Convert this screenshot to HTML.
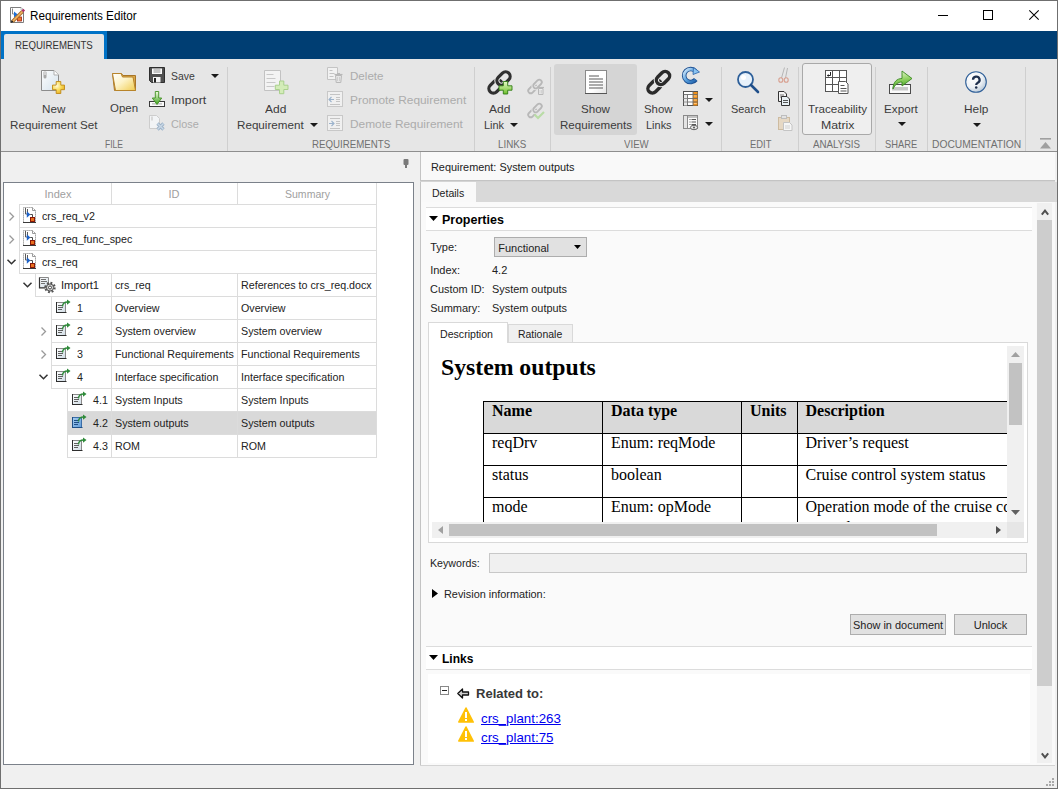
<!DOCTYPE html>
<html><head><meta charset="utf-8">
<style>
*{margin:0;padding:0;box-sizing:border-box}
html,body{width:1058px;height:789px;overflow:hidden;background:#f0f0f0;font-family:"Liberation Sans",sans-serif;color:#222}
.a{position:absolute}
.t{position:absolute;white-space:nowrap;line-height:1}
svg{position:absolute;overflow:visible}
</style></head><body>
<div class="a" style="left:0px;top:0px;width:1058px;height:789px;background:#6f6f6f;"></div>
<div class="a" style="left:1px;top:1px;width:1056px;height:787px;background:#f0f0f0;"></div>
<div class="a" style="left:1px;top:1px;width:1056px;height:30px;background:#ffffff;"></div>
<svg style="left:10px;top:7px" width="16" height="16" viewBox="0 0 16 16"><path d="M0.5 0.5h10.5l2.5 2.5v12.5h-13z" fill="#fff" stroke="#7d7d7d"/><path d="M11 0.5v2.5h2.5" fill="#f0f0f0" stroke="#aaa" stroke-width="0.6"/><path d="M2.5 1.5v5.5h1.5" fill="none" stroke="#6a6a6a" stroke-width="0.8"/><path d="M4 4.5l3.8 3-3.8 3z" fill="#1d6fd6"/><rect x="7.5" y="10" width="4" height="4" fill="#f07a28" stroke="#a02010" stroke-width="0.8"/><path d="M2.5 14.5L12.5 4.5" stroke="#a86a2a" stroke-width="3.4"/><path d="M2.5 14.5L12.5 4.5" stroke="#f2b664" stroke-width="1.6"/><path d="M11.5 3.5l1.8-1.8 1.8 1.8-1.8 1.8z" fill="#b0306a"/><path d="M0.8 15.7l0.8-2.6 1.8 1.8z" fill="#111"/></svg>
<div class="t" style="left:30.20px;top:8.70px;font:normal 12px 'Liberation Sans',sans-serif;color:#000;transform:scaleX(0.9754);transform-origin:0 0;">Requirements Editor</div>
<div class="a" style="left:938px;top:15px;width:10px;height:1px;background:#000;"></div>
<div class="a" style="left:983px;top:10px;width:10px;height:10px;border:1px solid #000;"></div>
<svg style="left:1029px;top:10px" width="10" height="10" viewBox="0 0 10 10"><path d="M0.3 0.3L9.7 9.7M9.7 0.3L0.3 9.7" stroke="#000" stroke-width="1.05"/></svg>
<div class="a" style="left:1px;top:31px;width:1056px;height:28px;background:#003e73;"></div>
<div class="a" style="left:1px;top:31px;width:106px;height:28px;background:#0072c6;"></div>
<div class="a" style="left:4px;top:34px;width:100px;height:25px;background:#e6e6e6;border-radius:2px 2px 0 0;"></div>
<div class="t" style="left:15.30px;top:39.80px;font:normal 10px 'Liberation Sans',sans-serif;color:#333;transform:scaleX(0.9645);transform-origin:0 0;">REQUIREMENTS</div>
<div class="a" style="left:1px;top:59px;width:1056px;height:92px;background:#e6e6e6;"></div>
<div class="a" style="left:1px;top:151px;width:1056px;height:1px;background:#8e8e8e;"></div>
<div class="a" style="left:227px;top:67px;width:1px;height:84px;background:#cfcfcf;"></div>
<div class="a" style="left:474px;top:67px;width:1px;height:84px;background:#cfcfcf;"></div>
<div class="a" style="left:550px;top:67px;width:1px;height:84px;background:#cfcfcf;"></div>
<div class="a" style="left:721px;top:67px;width:1px;height:84px;background:#cfcfcf;"></div>
<div class="a" style="left:798px;top:67px;width:1px;height:84px;background:#cfcfcf;"></div>
<div class="a" style="left:875px;top:67px;width:1px;height:84px;background:#cfcfcf;"></div>
<div class="a" style="left:927px;top:67px;width:1px;height:84px;background:#cfcfcf;"></div>
<div class="a" style="left:1025px;top:67px;width:1px;height:84px;background:#cfcfcf;"></div>
<svg style="left:41px;top:70px" width="24" height="24" viewBox="0 0 24 24"><defs><linearGradient id="dg" x1="0" y1="0" x2="1" y2="1"><stop offset="0" stop-color="#fdfdfd"/><stop offset="1" stop-color="#d5e3ee"/></linearGradient><radialGradient id="pg" cx="35%" cy="35%" r="75%"><stop offset="0" stop-color="#fffbe0"/><stop offset="0.5" stop-color="#f8dc5a"/><stop offset="1" stop-color="#e8a818"/></radialGradient></defs>
<path d="M0.5 0.5h12.5l4.5 4.5v15.5h-17z" fill="url(#dg)" stroke="#8c8c8c"/><path d="M13 0.5v4.5h4.5" fill="#fff" stroke="#b0b0b0"/>
<rect x="2.5" y="1" width="3" height="7.5" rx="1.5" fill="#a8a8a8"/><rect x="3.4" y="1" width="1.2" height="4" fill="#eee"/>
<path d="M15.2 11.5h4.6v3.6h3.7v4.6h-3.7v3.8h-4.6v-3.8h-3.7v-4.6h3.7z" fill="url(#pg)" stroke="#c08a18" stroke-width="0.9"/></svg>
<div class="t" style="left:41.60px;top:102.60px;font:normal 11.5px 'Liberation Sans',sans-serif;color:#3c3c3c;transform:scaleX(1.0124);transform-origin:0 0;">New</div>
<div class="t" style="left:9.50px;top:118.60px;font:normal 11.5px 'Liberation Sans',sans-serif;color:#3c3c3c;transform:scaleX(1.0139);transform-origin:0 0;">Requirement Set</div>
<svg style="left:112px;top:73px" width="24" height="18" viewBox="0 0 24 18"><defs><linearGradient id="fg" x1="0" y1="0" x2="1" y2="1"><stop offset="0" stop-color="#ffffff"/><stop offset="0.45" stop-color="#fdf3c8"/><stop offset="1" stop-color="#f0cc50"/></linearGradient></defs>
<path d="M0.5 0.5h9l1.5 2h12.5v15h-21z" fill="#d9a84a" stroke="#a87628"/>
<path d="M0.5 0.5h8.5l1.5 3.5h10.5l2.5 13.5h-20z" fill="url(#fg)" stroke="#b8842a"/></svg>
<div class="t" style="left:110.00px;top:102.40px;font:normal 11.5px 'Liberation Sans',sans-serif;color:#3c3c3c;transform:scaleX(0.9950);transform-origin:0 0;">Open</div>
<svg style="left:149px;top:67px" width="16" height="16" viewBox="0 0 16 16"><path d="M0.5 0.5h15v15h-13l-2-2z" fill="#505050" stroke="#2e2e2e"/><rect x="3" y="1.5" width="10" height="5.5" fill="#fafafa"/><path d="M4.5 3h7M4.5 5h7" stroke="#777" stroke-width="0.8"/><rect x="4" y="10" width="7.5" height="5.5" fill="#f4f4f4"/><rect x="5" y="11" width="2" height="4.5" fill="#222"/></svg>
<div class="t" style="left:171.30px;top:70.00px;font:normal 11.5px 'Liberation Sans',sans-serif;color:#3c3c3c;transform:scaleX(0.9077);transform-origin:0 0;">Save</div>
<svg style="left:211px;top:74px" width="8" height="4" viewBox="0 0 8 4"><path d="M0 0h8l-4 4z" fill="#1a1a1a"/></svg>
<svg style="left:149px;top:91px" width="16" height="16" viewBox="0 0 16 16"><defs><linearGradient id="ag" x1="0" y1="0" x2="0" y2="1"><stop offset="0" stop-color="#f4ffe0"/><stop offset="1" stop-color="#3aa01a"/></linearGradient></defs><rect x="0.5" y="10.5" width="15" height="5" fill="#fafafa" stroke="#3a3a3a"/><rect x="3" y="12" width="10" height="1.6" fill="#c8c8c8"/><path d="M6.3 0.5h3.4v6.5h3l-4.7 6.5-4.7-6.5h3z" fill="url(#ag)" stroke="#3f8f20" stroke-width="0.9"/></svg>
<div class="t" style="left:171.30px;top:93.80px;font:normal 11.5px 'Liberation Sans',sans-serif;color:#3c3c3c;transform:scaleX(1.0830);transform-origin:0 0;">Import</div>
<svg style="left:149px;top:115px" width="16" height="16" viewBox="0 0 16 16"><path d="M0.5 0.5h7l3 3v10h-10z" fill="#f2f4f6" stroke="#cdcdcd"/><rect x="2" y="1.5" width="2" height="4" fill="#d8d8d8"/><path d="M8.5 8.5l6 6M14.5 8.5l-6 6" stroke="#9db3c8" stroke-width="3.2"/><path d="M8.5 8.5l6 6M14.5 8.5l-6 6" stroke="#c9d8e6" stroke-width="1.4"/></svg>
<div class="t" style="left:171.30px;top:117.70px;font:normal 11.5px 'Liberation Sans',sans-serif;color:#acacac;transform:scaleX(0.9454);transform-origin:0 0;">Close</div>
<div class="t" style="left:105.00px;top:137.80px;font:normal 10.5px 'Liberation Sans',sans-serif;color:#707070;transform:scaleX(0.8113);transform-origin:0 0;">FILE</div>
<svg style="left:264px;top:70px" width="25" height="25" viewBox="0 0 25 25"><path d="M0.5 0.5h16v20h-16z" fill="#f3f3f3" stroke="#c2c2c2"/><path d="M2.5 4.5h7M2.5 8.5h9M2.5 12.5h9M2.5 16.5h8" stroke="#c8c8c8"/>
<path d="M15.5 11h4.3v4.2h4.2v4.3h-4.2v4.2h-4.3v-4.2h-4.2v-4.3h4.2z" fill="#d3ecb8" stroke="#a9d08c" stroke-width="1"/></svg>
<div class="t" style="left:265.20px;top:102.60px;font:normal 11.5px 'Liberation Sans',sans-serif;color:#3c3c3c;transform:scaleX(1.0406);transform-origin:0 0;">Add</div>
<div class="t" style="left:236.80px;top:118.60px;font:normal 11.5px 'Liberation Sans',sans-serif;color:#3c3c3c;transform:scaleX(1.0130);transform-origin:0 0;">Requirement</div>
<svg style="left:310px;top:123px" width="8" height="4" viewBox="0 0 8 4"><path d="M0 0h8l-4 4z" fill="#1a1a1a"/></svg>
<svg style="left:327px;top:67px" width="16" height="16" viewBox="0 0 16 16"><path d="M0.5 0.5h10v12h-10z" fill="#f2f2f2" stroke="#c4c4c4"/><path d="M2.5 3.5h3M2.5 6.5h5M2.5 9.5h4" stroke="#c4c4c4"/><path d="M7.5 7.5h8" stroke="#b8b8b8" stroke-width="1.2"/><path d="M10 6.5h3" stroke="#b8b8b8"/><path d="M8.5 8.5h6l-0.7 7h-4.6z" fill="#e6e6e6" stroke="#b8b8b8"/><path d="M10.5 10v4M12.5 10v4" stroke="#cfcfcf"/></svg>
<svg style="left:327px;top:91px" width="16" height="16" viewBox="0 0 16 16"><rect x="0.5" y="0.5" width="15" height="15" fill="#f0f0f0" stroke="#c8c8c8"/><path d="M3 3.5h10M9 6.5h4M9 8.5h4M9 10.5h4M3 13.5h10" stroke="#c4c4c4"/><path d="M2 8.5h5M4.5 6l-2.5 2.5 2.5 2.5" stroke="#9cb3cc" fill="none" stroke-width="1.1"/></svg>
<svg style="left:327px;top:115px" width="16" height="16" viewBox="0 0 16 16"><rect x="0.5" y="0.5" width="15" height="15" fill="#f0f0f0" stroke="#c8c8c8"/><path d="M3 3.5h10M9 6.5h4M9 8.5h4M9 10.5h4M3 13.5h10" stroke="#c4c4c4"/><path d="M2 8.5h5M4.5 6l2.5 2.5-2.5 2.5" stroke="#9cb3cc" fill="none" stroke-width="1.1"/></svg>
<div class="t" style="left:349.50px;top:70.00px;font:normal 11.5px 'Liberation Sans',sans-serif;color:#acacac;transform:scaleX(1.0075);transform-origin:0 0;">Delete</div>
<div class="t" style="left:349.50px;top:93.80px;font:normal 11.5px 'Liberation Sans',sans-serif;color:#acacac;transform:scaleX(1.0329);transform-origin:0 0;">Promote Requirement</div>
<div class="t" style="left:349.50px;top:117.70px;font:normal 11.5px 'Liberation Sans',sans-serif;color:#acacac;transform:scaleX(1.0328);transform-origin:0 0;">Demote Requirement</div>
<div class="t" style="left:312.10px;top:137.80px;font:normal 10.5px 'Liberation Sans',sans-serif;color:#707070;transform:scaleX(0.9244);transform-origin:0 0;">REQUIREMENTS</div>
<svg style="left:488px;top:70px" width="24" height="24" viewBox="0 0 24 24"><rect x="0.0" y="12.0" width="15" height="9" rx="4.5" transform="rotate(-45 7.5 16.5)" fill="none" stroke="#303030" stroke-width="3.2" /><rect x="8.0" y="4.0" width="15" height="9" rx="4.5" transform="rotate(-45 15.5 8.5)" fill="none" stroke="#e6e6e6" stroke-width="5.2" /><rect x="8.0" y="4.0" width="15" height="9" rx="4.5" transform="rotate(-45 15.5 8.5)" fill="none" stroke="#303030" stroke-width="3.2" /><defs><linearGradient id="gp" x1="0" y1="0" x2="0" y2="1"><stop offset="0" stop-color="#eafbc8"/><stop offset="1" stop-color="#6cbf2a"/></linearGradient></defs><path d="M15.3 11.5h4.4v4.3h4.3v4.4h-4.3v3.8h-4.4v-3.8h-4.3v-4.4h4.3z" fill="url(#gp)" stroke="#2f7d14" stroke-width="0.9"/></svg>
<div class="t" style="left:489.10px;top:102.60px;font:normal 11.5px 'Liberation Sans',sans-serif;color:#3c3c3c;transform:scaleX(1.0455);transform-origin:0 0;">Add</div>
<div class="t" style="left:483.70px;top:118.60px;font:normal 11.5px 'Liberation Sans',sans-serif;color:#3c3c3c;transform:scaleX(0.9522);transform-origin:0 0;">Link</div>
<svg style="left:510px;top:123px" width="8" height="4" viewBox="0 0 8 4"><path d="M0 0h8l-4 4z" fill="#1a1a1a"/></svg>
<svg style="left:528px;top:79px" width="16" height="16" viewBox="0 0 16 16"><rect x="-0.5" y="7.5" width="10" height="5" rx="2.5" transform="rotate(-45 4.5 10)" fill="none" stroke="#b8b8b8" stroke-width="1.8" /><rect x="4.5" y="2.5" width="10" height="5" rx="2.5" transform="rotate(-45 9.5 5)" fill="none" stroke="#e6e6e6" stroke-width="3.8" stroke-dasharray="0"/><rect x="4.5" y="2.5" width="10" height="5" rx="2.5" transform="rotate(-45 9.5 5)" fill="none" stroke="#b8b8b8" stroke-width="1.8" /><path d="M9 8.5h7" stroke="#b8b8b8" stroke-width="1.2"/><path d="M10.5 9.5h4.5v6h-4.5z" fill="#ececec" stroke="#b8b8b8"/><path d="M12 11v3.5M13.5 11v3.5" stroke="#c8c8c8" stroke-width="0.7"/></svg>
<svg style="left:528px;top:103px" width="16" height="16" viewBox="0 0 16 16"><rect x="-0.5" y="7.5" width="10" height="5" rx="2.5" transform="rotate(-45 4.5 10)" fill="none" stroke="#b8b8b8" stroke-width="1.8" /><rect x="4.5" y="2.5" width="10" height="5" rx="2.5" transform="rotate(-45 9.5 5)" fill="none" stroke="#e6e6e6" stroke-width="3.8" stroke-dasharray="0"/><rect x="4.5" y="2.5" width="10" height="5" rx="2.5" transform="rotate(-45 9.5 5)" fill="none" stroke="#b8b8b8" stroke-width="1.8" /><path d="M6.5 11.5l3.5 3.5 6-6" fill="none" stroke="#b9dca6" stroke-width="2.2"/></svg>
<div class="t" style="left:498.30px;top:137.80px;font:normal 10.5px 'Liberation Sans',sans-serif;color:#707070;transform:scaleX(0.9322);transform-origin:0 0;">LINKS</div>
<div class="a" style="left:554px;top:64px;width:83px;height:71px;background:#d5d5d5;border-radius:3px;"></div>
<svg style="left:585px;top:70px" width="22" height="24" viewBox="0 0 22 24"><defs><linearGradient id="sg" x1="0" y1="0" x2="1" y2="1"><stop offset="0.6" stop-color="#ffffff"/><stop offset="1" stop-color="#e4e4e4"/></linearGradient></defs><rect x="0.5" y="0.5" width="21" height="23" fill="url(#sg)" stroke="#8a8a8a"/><path d="M0 23.5h22" stroke="#555"/><path d="M4 6h10M4 9h14M4 12h14M4 15h14M4 18h14" stroke="#5a5a5a" stroke-width="1.1"/></svg>
<div class="t" style="left:581.10px;top:102.60px;font:normal 11.5px 'Liberation Sans',sans-serif;color:#3c3c3c;transform:scaleX(1.0076);transform-origin:0 0;">Show</div>
<div class="t" style="left:559.70px;top:118.60px;font:normal 11.5px 'Liberation Sans',sans-serif;color:#3c3c3c;transform:scaleX(1.0057);transform-origin:0 0;">Requirements</div>
<svg style="left:647px;top:70px" width="24" height="24" viewBox="0 0 24 24"><rect x="0.0" y="12.0" width="15" height="9" rx="4.5" transform="rotate(-45 7.5 16.5)" fill="none" stroke="#2b2b2b" stroke-width="3.4" /><rect x="8.5" y="3.5" width="15" height="9" rx="4.5" transform="rotate(-45 16 8)" fill="none" stroke="#e6e6e6" stroke-width="5.4" /><rect x="8.5" y="3.5" width="15" height="9" rx="4.5" transform="rotate(-45 16 8)" fill="none" stroke="#2b2b2b" stroke-width="3.4" /></svg>
<div class="t" style="left:644.10px;top:102.60px;font:normal 11.5px 'Liberation Sans',sans-serif;color:#3c3c3c;transform:scaleX(0.9937);transform-origin:0 0;">Show</div>
<div class="t" style="left:645.60px;top:118.60px;font:normal 11.5px 'Liberation Sans',sans-serif;color:#3c3c3c;transform:scaleX(0.9531);transform-origin:0 0;">Links</div>
<svg style="left:683px;top:67px" width="17" height="17" viewBox="0 0 17 17"><defs><linearGradient id="rg" x1="0" y1="0" x2="1" y2="1"><stop offset="0" stop-color="#d8ecfb"/><stop offset="0.5" stop-color="#5aa2e0"/><stop offset="1" stop-color="#1f5fa8"/></linearGradient></defs><path d="M12.5 4.2A6.5 6.5 0 1 0 12.8 12.5" fill="none" stroke="#1d4f90" stroke-width="4.6"/><path d="M12.5 4.2A6.5 6.5 0 1 0 12.8 12.5" fill="none" stroke="url(#rg)" stroke-width="2.8"/><path d="M10.5 0.5l6 4.5-6.5 2.5z" fill="#8cc4f0" stroke="#2a62a8" stroke-width="0.8"/></svg>
<svg style="left:683px;top:91px" width="15" height="15" viewBox="0 0 15 15"><rect x="0.5" y="0.5" width="14" height="14" fill="#fff" stroke="#505050"/><rect x="10" y="1" width="4.5" height="13.5" fill="#f0901a"/><path d="M0.5 3.5h14M0.5 7.5h14M0.5 11h14M4.5 3.5v11M10 0.5v14" stroke="#6a6a6a" stroke-width="0.9"/><rect x="1" y="4" width="3" height="10.5" fill="#e8e8e8"/><path d="M0.5 7.5h4M0.5 11h4" stroke="#8a8a8a" stroke-width="0.9"/><path d="M10.8 5h3M10.8 9h3M10.8 12.5h3" stroke="#ffd090" stroke-width="0.8"/></svg>
<svg style="left:705px;top:98px" width="8" height="4" viewBox="0 0 8 4"><path d="M0 0h8l-4 4z" fill="#1a1a1a"/></svg>
<svg style="left:683px;top:115px" width="16" height="15" viewBox="0 0 16 15"><rect x="0.5" y="0.5" width="4" height="13" fill="#e4e4e4" stroke="#8a8a8a"/><rect x="4.5" y="0.5" width="10" height="13" fill="#fafafa" stroke="#8a8a8a"/><path d="M4.5 2h10" stroke="#8a8a8a"/><path d="M6.5 4.5h1M6.5 7h1M6.5 9.5h1M8.5 4.5h4.5M8.5 7h4.5M8.5 9.5h4.5" stroke="#444" stroke-width="0.9"/><ellipse cx="11" cy="12.5" rx="3.6" ry="2.2" fill="#e8e8e8" stroke="#555" stroke-width="0.9"/><circle cx="11" cy="12.5" r="1" fill="#555"/></svg>
<svg style="left:705px;top:122px" width="8" height="4" viewBox="0 0 8 4"><path d="M0 0h8l-4 4z" fill="#1a1a1a"/></svg>
<div class="t" style="left:623.60px;top:137.80px;font:normal 10.5px 'Liberation Sans',sans-serif;color:#707070;transform:scaleX(0.9201);transform-origin:0 0;">VIEW</div>
<svg style="left:737px;top:71px" width="22" height="22" viewBox="0 0 22 22"><circle cx="8.5" cy="8.5" r="7.5" fill="#e8f2fb" stroke="#2d5f99" stroke-width="1.8"/><circle cx="6.5" cy="6.5" r="2.5" fill="#fff"/><path d="M14 14l7 7" stroke="#1f4f8a" stroke-width="2.6" stroke-linecap="round"/></svg>
<div class="t" style="left:730.70px;top:102.60px;font:normal 11.5px 'Liberation Sans',sans-serif;color:#3c3c3c;transform:scaleX(0.9496);transform-origin:0 0;">Search</div>
<svg style="left:778px;top:67px" width="11" height="16" viewBox="0 0 11 16"><path d="M3.5 11L6.5 0.5M7.5 11L9.5 1" stroke="#b0b0b0" stroke-width="0.9"/><ellipse cx="2.8" cy="13" rx="2" ry="2.3" fill="none" stroke="#d8a090" stroke-width="1.1"/><ellipse cx="8.2" cy="13" rx="2" ry="2.3" fill="none" stroke="#d8a090" stroke-width="1.1"/></svg>
<svg style="left:778px;top:91px" width="13" height="15" viewBox="0 0 13 15"><path d="M0.5 0.5h5.5l2.5 2.5v7.5h-8z" fill="#f4f4f4" stroke="#333"/><path d="M2 4h4M2 6h4" stroke="#555" stroke-width="0.8"/><path d="M3.5 5.5h5.5l2.5 2.5v6.5h-8z" fill="#e8f0f4" stroke="#333"/><path d="M5 9.5h5M5 11.5h5" stroke="#444" stroke-width="0.9"/></svg>
<svg style="left:778px;top:115px" width="15" height="16" viewBox="0 0 15 16"><rect x="0.5" y="2.5" width="11" height="12" fill="#e6d8c4" stroke="#cdbba0"/><rect x="3.5" y="0.5" width="5" height="3" fill="#e2e2e2" stroke="#bdbdbd"/><path d="M5.5 7.5h6l2.5 2.5v5.5h-8.5z" fill="#f6f6f6" stroke="#c4c4c4"/><path d="M7 11h5M7 13h5" stroke="#c8c8c8" stroke-width="0.8"/></svg>
<div class="t" style="left:749.70px;top:137.80px;font:normal 10.5px 'Liberation Sans',sans-serif;color:#707070;transform:scaleX(0.8946);transform-origin:0 0;">EDIT</div>
<div class="a" style="left:802px;top:63px;width:70px;height:72px;background:#efefef;border:1px solid #a9a9a9;border-radius:3px;"></div>
<svg style="left:825px;top:70px" width="24" height="24" viewBox="0 0 24 24"><rect x="0.5" y="0.5" width="21" height="21" fill="#fff" stroke="#555"/><path d="M7.5 0.5v21M14.5 0.5v21M0.5 7.5h21M0.5 14.5h21" stroke="#555"/><path d="M5.5 2v3.5h-3" fill="none" stroke="#222"/><path d="M2 5.5l1.6-1.4v2.8z" fill="#222"/>
<path d="M13.5 11.5h7l2.5 2.5v9.5h-9.5z" fill="#fff" stroke="#555"/><path d="M15.5 15.5h4M15.5 18.5h6M15.5 21h6" stroke="#555"/></svg>
<div class="t" style="left:807.70px;top:102.60px;font:normal 11.5px 'Liberation Sans',sans-serif;color:#3c3c3c;transform:scaleX(1.0107);transform-origin:0 0;">Traceability</div>
<div class="t" style="left:820.70px;top:118.60px;font:normal 11.5px 'Liberation Sans',sans-serif;color:#3c3c3c;transform:scaleX(1.0699);transform-origin:0 0;">Matrix</div>
<div class="t" style="left:813.30px;top:137.80px;font:normal 10.5px 'Liberation Sans',sans-serif;color:#707070;transform:scaleX(0.9312);transform-origin:0 0;">ANALYSIS</div>
<svg style="left:889px;top:70px" width="24" height="24" viewBox="0 0 24 24"><defs><linearGradient id="eg" x1="0.3" y1="0" x2="0.5" y2="1"><stop offset="0" stop-color="#e8f8d0"/><stop offset="0.5" stop-color="#8fd060"/><stop offset="1" stop-color="#3f9a22"/></linearGradient></defs><rect x="0.5" y="14.5" width="21" height="9" fill="#fafafa" stroke="#4a4a4a"/><rect x="3" y="17" width="16" height="3.5" fill="#c8c8c8"/><path d="M4 19C4 12 8 8.5 13 8.5V1l10 7.5-10 7.5v-4C9 12 6 14.5 4 19z" fill="url(#eg)" stroke="#3a8a20" stroke-width="0.9"/></svg>
<div class="t" style="left:884.10px;top:102.60px;font:normal 11.5px 'Liberation Sans',sans-serif;color:#3c3c3c;transform:scaleX(1.0165);transform-origin:0 0;">Export</div>
<svg style="left:898px;top:122px" width="8" height="4" viewBox="0 0 8 4"><path d="M0 0h8l-4 4z" fill="#1a1a1a"/></svg>
<div class="t" style="left:885.40px;top:137.80px;font:normal 10.5px 'Liberation Sans',sans-serif;color:#707070;transform:scaleX(0.8898);transform-origin:0 0;">SHARE</div>
<svg style="left:965px;top:71px" width="22" height="22" viewBox="0 0 22 22"><defs><radialGradient id="hg" cx="35%" cy="30%" r="75%"><stop offset="0" stop-color="#ffffff"/><stop offset="0.6" stop-color="#eef2f6"/><stop offset="1" stop-color="#b8c8d8"/></radialGradient></defs><circle cx="11" cy="11" r="10.3" fill="url(#hg)" stroke="#2f5f98" stroke-width="1.1"/><path d="M8 8.8a3.3 3.2 0 1 1 4.8 2.9c-1.1 0.6-1.6 1.1-1.6 2.4" fill="none" stroke="#1f304e" stroke-width="2.3"/><circle cx="11.2" cy="16.6" r="1.25" fill="#1f304e"/></svg>
<div class="t" style="left:963.60px;top:102.60px;font:normal 11.5px 'Liberation Sans',sans-serif;color:#3c3c3c;transform:scaleX(1.0314);transform-origin:0 0;">Help</div>
<svg style="left:973px;top:123px" width="8" height="4" viewBox="0 0 8 4"><path d="M0 0h8l-4 4z" fill="#1a1a1a"/></svg>
<div class="t" style="left:931.90px;top:137.80px;font:normal 10.5px 'Liberation Sans',sans-serif;color:#707070;transform:scaleX(0.9791);transform-origin:0 0;">DOCUMENTATION</div>
<svg style="left:1040px;top:138px" width="11" height="11" viewBox="0 0 11 11"><rect x="0" y="0" width="11" height="1.6" fill="#a0a0a0"/><path d="M0 10.5L5.5 4 11 10.5z" fill="#a0a0a0"/></svg>
<svg style="left:403px;top:159px" width="6" height="9" viewBox="0 0 6 9"><rect x="0.5" y="0" width="5" height="6" rx="1" fill="#7a7a7a"/><rect x="2" y="6" width="2" height="3" fill="#7a7a7a"/></svg>
<div class="a" style="left:3px;top:182px;width:411px;height:583px;background:#ffffff;border:1px solid #7b818a;"></div>
<div class="t" style="left:44.54px;top:187.60px;font:normal 11px 'Liberation Sans',sans-serif;color:#a0a0a0;">Index</div>
<div class="t" style="left:168.50px;top:187.60px;font:normal 11px 'Liberation Sans',sans-serif;color:#a0a0a0;">ID</div>
<div class="t" style="left:284.50px;top:187.60px;font:normal 11px 'Liberation Sans',sans-serif;color:#a0a0a0;transform:scaleX(0.9562);transform-origin:0 0;">Summary</div>
<div class="a" style="left:111px;top:183px;width:1px;height:21px;background:#dcdcdc;"></div>
<div class="a" style="left:237px;top:183px;width:1px;height:21px;background:#dcdcdc;"></div>
<div class="a" style="left:376px;top:183px;width:1px;height:21px;background:#dcdcdc;"></div>
<div class="a" style="left:19px;top:204px;width:358px;height:1px;background:#dcdcdc;"></div>
<div class="a" style="left:19px;top:204px;width:1px;height:24px;background:#dcdcdc;"></div>
<div class="a" style="left:376px;top:204px;width:1px;height:24px;background:#dcdcdc;"></div>
<svg style="left:9px;top:212px" width="5" height="9" viewBox="0 0 5 9"><path d="M0.5 0.5L4.5 4.5 0.5 8.5" fill="none" stroke="#9a9a9a" stroke-width="1.3"/></svg>
<svg style="left:23px;top:207px" width="14" height="16" viewBox="0 0 14 16"><path d="M0.5 15.5V0.5h9l3 3v12" fill="#fff" stroke="#8a8a8a" stroke-dasharray="1.2 0.8"/><path d="M0 15.5h13" stroke="#3a3a3a"/><path d="M9.5 0.5v3h3" fill="none" stroke="#9a9a9a"/><path d="M2.5 1v6h1.5M4.5 2v4" fill="none" stroke="#5a5a5a"/><path d="M3.8 4.2l3.6 3.3-3.6 3.3z" fill="#1d62c8"/><path d="M7.2 7.5h2.3v2.5" fill="none" stroke="#4a4a4a"/><rect x="7.5" y="10.5" width="4" height="4" fill="#e8701e" stroke="#8a1808"/></svg>
<div class="t" style="left:42.00px;top:210.00px;font:normal 10.7px 'Liberation Sans',sans-serif;color:#222;">crs_req_v2</div>
<div class="a" style="left:19px;top:227px;width:358px;height:1px;background:#dcdcdc;"></div>
<div class="a" style="left:19px;top:227px;width:1px;height:24px;background:#dcdcdc;"></div>
<div class="a" style="left:376px;top:227px;width:1px;height:24px;background:#dcdcdc;"></div>
<svg style="left:9px;top:235px" width="5" height="9" viewBox="0 0 5 9"><path d="M0.5 0.5L4.5 4.5 0.5 8.5" fill="none" stroke="#9a9a9a" stroke-width="1.3"/></svg>
<svg style="left:23px;top:230px" width="14" height="16" viewBox="0 0 14 16"><path d="M0.5 15.5V0.5h9l3 3v12" fill="#fff" stroke="#8a8a8a" stroke-dasharray="1.2 0.8"/><path d="M0 15.5h13" stroke="#3a3a3a"/><path d="M9.5 0.5v3h3" fill="none" stroke="#9a9a9a"/><path d="M2.5 1v6h1.5M4.5 2v4" fill="none" stroke="#5a5a5a"/><path d="M3.8 4.2l3.6 3.3-3.6 3.3z" fill="#1d62c8"/><path d="M7.2 7.5h2.3v2.5" fill="none" stroke="#4a4a4a"/><rect x="7.5" y="10.5" width="4" height="4" fill="#e8701e" stroke="#8a1808"/></svg>
<div class="t" style="left:42.00px;top:233.00px;font:normal 10.7px 'Liberation Sans',sans-serif;color:#222;">crs_req_func_spec</div>
<div class="a" style="left:19px;top:250px;width:358px;height:1px;background:#dcdcdc;"></div>
<div class="a" style="left:19px;top:250px;width:1px;height:24px;background:#dcdcdc;"></div>
<div class="a" style="left:376px;top:250px;width:1px;height:24px;background:#dcdcdc;"></div>
<svg style="left:7px;top:259px" width="9" height="6" viewBox="0 0 9 6"><path d="M0.5 0.8L4.5 4.8 8.5 0.8" fill="none" stroke="#333" stroke-width="1.5"/></svg>
<svg style="left:23px;top:253px" width="14" height="16" viewBox="0 0 14 16"><path d="M0.5 15.5V0.5h9l3 3v12" fill="#fff" stroke="#8a8a8a" stroke-dasharray="1.2 0.8"/><path d="M0 15.5h13" stroke="#3a3a3a"/><path d="M9.5 0.5v3h3" fill="none" stroke="#9a9a9a"/><path d="M2.5 1v6h1.5M4.5 2v4" fill="none" stroke="#5a5a5a"/><path d="M3.8 4.2l3.6 3.3-3.6 3.3z" fill="#1d62c8"/><path d="M7.2 7.5h2.3v2.5" fill="none" stroke="#4a4a4a"/><rect x="7.5" y="10.5" width="4" height="4" fill="#e8701e" stroke="#8a1808"/></svg>
<div class="t" style="left:42.00px;top:256.00px;font:normal 10.7px 'Liberation Sans',sans-serif;color:#222;">crs_req</div>
<div class="a" style="left:19px;top:273px;width:358px;height:1px;background:#dcdcdc;"></div>
<div class="a" style="left:35px;top:273px;width:1px;height:24px;background:#dcdcdc;"></div>
<div class="a" style="left:376px;top:273px;width:1px;height:24px;background:#dcdcdc;"></div>
<div class="a" style="left:111px;top:273px;width:1px;height:24px;background:#dcdcdc;"></div>
<div class="a" style="left:237px;top:273px;width:1px;height:24px;background:#dcdcdc;"></div>
<svg style="left:23px;top:282px" width="9" height="6" viewBox="0 0 9 6"><path d="M0.5 0.8L4.5 4.8 8.5 0.8" fill="none" stroke="#333" stroke-width="1.5"/></svg>
<svg style="left:39px;top:277px" width="17" height="17" viewBox="0 0 17 17"><defs><linearGradient id="ig" x1="0" y1="0" x2="1" y2="1"><stop offset="0" stop-color="#ffffff"/><stop offset="1" stop-color="#d0dce6"/></linearGradient></defs><path d="M0.5 0.5h9v10h-9z" fill="url(#ig)" stroke="#8a8a8a"/><path d="M0.5 0.5v10.5h6" fill="none" stroke="#333" stroke-width="1.2"/><path d="M2 2.5h5M2 4.5h6M2 6.5h4" stroke="#707070" stroke-width="1"/><circle cx="11" cy="10.5" r="4.6" fill="none" stroke="#555" stroke-width="2.2" stroke-dasharray="1.8 1.8"/><circle cx="11" cy="10.5" r="3.6" fill="#d8d8d8" stroke="#4a4a4a" stroke-width="1"/><circle cx="11" cy="10.5" r="1.5" fill="#fff" stroke="#333" stroke-width="0.9"/></svg>
<div class="t" style="left:61.00px;top:279.00px;font:normal 10.7px 'Liberation Sans',sans-serif;color:#222;transform:scaleX(1.0515);transform-origin:0 0;">Import1</div>
<div class="t" style="left:115.00px;top:279.00px;font:normal 10.7px 'Liberation Sans',sans-serif;color:#222;">crs_req</div>
<div class="t" style="left:241.00px;top:279.00px;font:normal 10.7px 'Liberation Sans',sans-serif;color:#222;">References to crs_req.docx</div>
<div class="a" style="left:35px;top:296px;width:342px;height:1px;background:#dcdcdc;"></div>
<div class="a" style="left:51px;top:296px;width:1px;height:24px;background:#dcdcdc;"></div>
<div class="a" style="left:376px;top:296px;width:1px;height:24px;background:#dcdcdc;"></div>
<div class="a" style="left:111px;top:296px;width:1px;height:24px;background:#dcdcdc;"></div>
<div class="a" style="left:237px;top:296px;width:1px;height:24px;background:#dcdcdc;"></div>
<svg style="left:56px;top:299px" width="15" height="17" viewBox="0 0 15 17"><defs><linearGradient id="rq4" x1="0" y1="0" x2="1" y2="1"><stop offset="0" stop-color="#ffffff"/><stop offset="1" stop-color="#cfdbe4"/></linearGradient></defs><path d="M0.5 3.5h9v10h-9z" fill="url(#rq4)" stroke="#8a8a8a"/><path d="M0.5 3v10.5h10" fill="none" stroke="#2e2e2e" stroke-width="1"/><path d="M0 13.5h10" stroke="#2e2e2e" stroke-width="1"/><path d="M2 6.5h4M2 8.5h5M2 10.5h4" stroke="#606060" stroke-width="1"/><path d="M6.5 7.5c0-3 2-4.5 5-4.5" fill="none" stroke="#2f8a3a" stroke-width="1.4"/><path d="M11 0.5l3.5 2.6-3.5 2.6z" fill="#2f8a3a"/></svg>
<div class="t" style="left:77.00px;top:302.00px;font:normal 10.7px 'Liberation Sans',sans-serif;color:#222;">1</div>
<div class="t" style="left:115.00px;top:302.00px;font:normal 10.7px 'Liberation Sans',sans-serif;color:#222;">Overview</div>
<div class="t" style="left:241.00px;top:302.00px;font:normal 10.7px 'Liberation Sans',sans-serif;color:#222;">Overview</div>
<div class="a" style="left:51px;top:319px;width:326px;height:1px;background:#dcdcdc;"></div>
<div class="a" style="left:51px;top:319px;width:1px;height:24px;background:#dcdcdc;"></div>
<div class="a" style="left:376px;top:319px;width:1px;height:24px;background:#dcdcdc;"></div>
<div class="a" style="left:111px;top:319px;width:1px;height:24px;background:#dcdcdc;"></div>
<div class="a" style="left:237px;top:319px;width:1px;height:24px;background:#dcdcdc;"></div>
<svg style="left:41px;top:327px" width="5" height="9" viewBox="0 0 5 9"><path d="M0.5 0.5L4.5 4.5 0.5 8.5" fill="none" stroke="#9a9a9a" stroke-width="1.3"/></svg>
<svg style="left:56px;top:322px" width="15" height="17" viewBox="0 0 15 17"><defs><linearGradient id="rq5" x1="0" y1="0" x2="1" y2="1"><stop offset="0" stop-color="#ffffff"/><stop offset="1" stop-color="#cfdbe4"/></linearGradient></defs><path d="M0.5 3.5h9v10h-9z" fill="url(#rq5)" stroke="#8a8a8a"/><path d="M0.5 3v10.5h10" fill="none" stroke="#2e2e2e" stroke-width="1"/><path d="M0 13.5h10" stroke="#2e2e2e" stroke-width="1"/><path d="M2 6.5h4M2 8.5h5M2 10.5h4" stroke="#606060" stroke-width="1"/><path d="M6.5 7.5c0-3 2-4.5 5-4.5" fill="none" stroke="#2f8a3a" stroke-width="1.4"/><path d="M11 0.5l3.5 2.6-3.5 2.6z" fill="#2f8a3a"/></svg>
<div class="t" style="left:77.00px;top:325.00px;font:normal 10.7px 'Liberation Sans',sans-serif;color:#222;">2</div>
<div class="t" style="left:115.00px;top:325.00px;font:normal 10.7px 'Liberation Sans',sans-serif;color:#222;">System overview</div>
<div class="t" style="left:241.00px;top:325.00px;font:normal 10.7px 'Liberation Sans',sans-serif;color:#222;">System overview</div>
<div class="a" style="left:51px;top:342px;width:326px;height:1px;background:#dcdcdc;"></div>
<div class="a" style="left:51px;top:342px;width:1px;height:24px;background:#dcdcdc;"></div>
<div class="a" style="left:376px;top:342px;width:1px;height:24px;background:#dcdcdc;"></div>
<div class="a" style="left:111px;top:342px;width:1px;height:24px;background:#dcdcdc;"></div>
<div class="a" style="left:237px;top:342px;width:1px;height:24px;background:#dcdcdc;"></div>
<svg style="left:41px;top:350px" width="5" height="9" viewBox="0 0 5 9"><path d="M0.5 0.5L4.5 4.5 0.5 8.5" fill="none" stroke="#9a9a9a" stroke-width="1.3"/></svg>
<svg style="left:56px;top:345px" width="15" height="17" viewBox="0 0 15 17"><defs><linearGradient id="rq6" x1="0" y1="0" x2="1" y2="1"><stop offset="0" stop-color="#ffffff"/><stop offset="1" stop-color="#cfdbe4"/></linearGradient></defs><path d="M0.5 3.5h9v10h-9z" fill="url(#rq6)" stroke="#8a8a8a"/><path d="M0.5 3v10.5h10" fill="none" stroke="#2e2e2e" stroke-width="1"/><path d="M0 13.5h10" stroke="#2e2e2e" stroke-width="1"/><path d="M2 6.5h4M2 8.5h5M2 10.5h4" stroke="#606060" stroke-width="1"/><path d="M6.5 7.5c0-3 2-4.5 5-4.5" fill="none" stroke="#2f8a3a" stroke-width="1.4"/><path d="M11 0.5l3.5 2.6-3.5 2.6z" fill="#2f8a3a"/></svg>
<div class="t" style="left:77.00px;top:348.00px;font:normal 10.7px 'Liberation Sans',sans-serif;color:#222;">3</div>
<div class="t" style="left:115.00px;top:348.00px;font:normal 10.7px 'Liberation Sans',sans-serif;color:#222;">Functional Requirements</div>
<div class="t" style="left:241.00px;top:348.00px;font:normal 10.7px 'Liberation Sans',sans-serif;color:#222;">Functional Requirements</div>
<div class="a" style="left:51px;top:365px;width:326px;height:1px;background:#dcdcdc;"></div>
<div class="a" style="left:51px;top:365px;width:1px;height:24px;background:#dcdcdc;"></div>
<div class="a" style="left:376px;top:365px;width:1px;height:24px;background:#dcdcdc;"></div>
<div class="a" style="left:111px;top:365px;width:1px;height:24px;background:#dcdcdc;"></div>
<div class="a" style="left:237px;top:365px;width:1px;height:24px;background:#dcdcdc;"></div>
<svg style="left:39px;top:374px" width="9" height="6" viewBox="0 0 9 6"><path d="M0.5 0.8L4.5 4.8 8.5 0.8" fill="none" stroke="#333" stroke-width="1.5"/></svg>
<svg style="left:56px;top:368px" width="15" height="17" viewBox="0 0 15 17"><defs><linearGradient id="rq7" x1="0" y1="0" x2="1" y2="1"><stop offset="0" stop-color="#ffffff"/><stop offset="1" stop-color="#cfdbe4"/></linearGradient></defs><path d="M0.5 3.5h9v10h-9z" fill="url(#rq7)" stroke="#8a8a8a"/><path d="M0.5 3v10.5h10" fill="none" stroke="#2e2e2e" stroke-width="1"/><path d="M0 13.5h10" stroke="#2e2e2e" stroke-width="1"/><path d="M2 6.5h4M2 8.5h5M2 10.5h4" stroke="#606060" stroke-width="1"/><path d="M6.5 7.5c0-3 2-4.5 5-4.5" fill="none" stroke="#2f8a3a" stroke-width="1.4"/><path d="M11 0.5l3.5 2.6-3.5 2.6z" fill="#2f8a3a"/></svg>
<div class="t" style="left:77.00px;top:371.00px;font:normal 10.7px 'Liberation Sans',sans-serif;color:#222;">4</div>
<div class="t" style="left:115.00px;top:371.00px;font:normal 10.7px 'Liberation Sans',sans-serif;color:#222;">Interface specification</div>
<div class="t" style="left:241.00px;top:371.00px;font:normal 10.7px 'Liberation Sans',sans-serif;color:#222;">Interface specification</div>
<div class="a" style="left:51px;top:388px;width:326px;height:1px;background:#dcdcdc;"></div>
<div class="a" style="left:67px;top:388px;width:1px;height:24px;background:#dcdcdc;"></div>
<div class="a" style="left:376px;top:388px;width:1px;height:24px;background:#dcdcdc;"></div>
<div class="a" style="left:111px;top:388px;width:1px;height:24px;background:#dcdcdc;"></div>
<div class="a" style="left:237px;top:388px;width:1px;height:24px;background:#dcdcdc;"></div>
<svg style="left:72px;top:391px" width="15" height="17" viewBox="0 0 15 17"><defs><linearGradient id="rq8" x1="0" y1="0" x2="1" y2="1"><stop offset="0" stop-color="#ffffff"/><stop offset="1" stop-color="#cfdbe4"/></linearGradient></defs><path d="M0.5 3.5h9v10h-9z" fill="url(#rq8)" stroke="#8a8a8a"/><path d="M0.5 3v10.5h10" fill="none" stroke="#2e2e2e" stroke-width="1"/><path d="M0 13.5h10" stroke="#2e2e2e" stroke-width="1"/><path d="M2 6.5h4M2 8.5h5M2 10.5h4" stroke="#606060" stroke-width="1"/><path d="M6.5 7.5c0-3 2-4.5 5-4.5" fill="none" stroke="#2f8a3a" stroke-width="1.4"/><path d="M11 0.5l3.5 2.6-3.5 2.6z" fill="#2f8a3a"/></svg>
<div class="t" style="left:93.00px;top:394.00px;font:normal 10.7px 'Liberation Sans',sans-serif;color:#222;">4.1</div>
<div class="t" style="left:115.00px;top:394.00px;font:normal 10.7px 'Liberation Sans',sans-serif;color:#222;">System Inputs</div>
<div class="t" style="left:241.00px;top:394.00px;font:normal 10.7px 'Liberation Sans',sans-serif;color:#222;">System Inputs</div>
<div class="a" style="left:68px;top:412px;width:308px;height:22px;background:#d9d9d9;"></div>
<div class="a" style="left:67px;top:411px;width:310px;height:1px;background:#dcdcdc;"></div>
<div class="a" style="left:67px;top:411px;width:1px;height:24px;background:#dcdcdc;"></div>
<div class="a" style="left:376px;top:411px;width:1px;height:24px;background:#dcdcdc;"></div>
<div class="a" style="left:111px;top:411px;width:1px;height:24px;background:#dcdcdc;"></div>
<div class="a" style="left:237px;top:411px;width:1px;height:24px;background:#dcdcdc;"></div>
<svg style="left:72px;top:414px" width="15" height="17" viewBox="0 0 15 17"><defs><linearGradient id="rq9" x1="0" y1="0" x2="1" y2="1"><stop offset="0" stop-color="#a8cdf0"/><stop offset="1" stop-color="#5f9ad6"/></linearGradient></defs><path d="M0.5 3.5h9v10h-9z" fill="url(#rq9)" stroke="#3b6ea8"/><path d="M0.5 3v10.5h10" fill="none" stroke="#1f4f86" stroke-width="1"/><path d="M0 13.5h10" stroke="#1f4f86" stroke-width="1"/><path d="M2 6.5h4M2 8.5h5M2 10.5h4" stroke="#1f4f86" stroke-width="1"/><path d="M6.5 7.5c0-3 2-4.5 5-4.5" fill="none" stroke="#2f8a3a" stroke-width="1.4"/><path d="M11 0.5l3.5 2.6-3.5 2.6z" fill="#2f8a3a"/></svg>
<div class="t" style="left:93.00px;top:417.00px;font:normal 10.7px 'Liberation Sans',sans-serif;color:#222;">4.2</div>
<div class="t" style="left:115.00px;top:417.00px;font:normal 10.7px 'Liberation Sans',sans-serif;color:#222;">System outputs</div>
<div class="t" style="left:241.00px;top:417.00px;font:normal 10.7px 'Liberation Sans',sans-serif;color:#222;">System outputs</div>
<div class="a" style="left:67px;top:434px;width:310px;height:1px;background:#dcdcdc;"></div>
<div class="a" style="left:67px;top:434px;width:1px;height:24px;background:#dcdcdc;"></div>
<div class="a" style="left:376px;top:434px;width:1px;height:24px;background:#dcdcdc;"></div>
<div class="a" style="left:111px;top:434px;width:1px;height:24px;background:#dcdcdc;"></div>
<div class="a" style="left:237px;top:434px;width:1px;height:24px;background:#dcdcdc;"></div>
<svg style="left:72px;top:437px" width="15" height="17" viewBox="0 0 15 17"><defs><linearGradient id="rq10" x1="0" y1="0" x2="1" y2="1"><stop offset="0" stop-color="#ffffff"/><stop offset="1" stop-color="#cfdbe4"/></linearGradient></defs><path d="M0.5 3.5h9v10h-9z" fill="url(#rq10)" stroke="#8a8a8a"/><path d="M0.5 3v10.5h10" fill="none" stroke="#2e2e2e" stroke-width="1"/><path d="M0 13.5h10" stroke="#2e2e2e" stroke-width="1"/><path d="M2 6.5h4M2 8.5h5M2 10.5h4" stroke="#606060" stroke-width="1"/><path d="M6.5 7.5c0-3 2-4.5 5-4.5" fill="none" stroke="#2f8a3a" stroke-width="1.4"/><path d="M11 0.5l3.5 2.6-3.5 2.6z" fill="#2f8a3a"/></svg>
<div class="t" style="left:93.00px;top:440.00px;font:normal 10.7px 'Liberation Sans',sans-serif;color:#222;">4.3</div>
<div class="t" style="left:115.00px;top:440.00px;font:normal 10.7px 'Liberation Sans',sans-serif;color:#222;">ROM</div>
<div class="t" style="left:241.00px;top:440.00px;font:normal 10.7px 'Liberation Sans',sans-serif;color:#222;">ROM</div>
<div class="a" style="left:67px;top:457px;width:310px;height:1px;background:#dcdcdc;"></div>
<div class="a" style="left:420px;top:152px;width:635px;height:614px;background:#f9f9f9;"></div>
<div class="a" style="left:420px;top:152px;width:1px;height:614px;background:#c4c4c4;"></div>
<div class="a" style="left:420px;top:180px;width:635px;height:1px;background:#c4c4c4;"></div>
<div class="a" style="left:420px;top:181px;width:635px;height:1px;background:#d4d4d4;"></div>
<div class="t" style="left:431.30px;top:160.60px;font:normal 11px 'Liberation Sans',sans-serif;color:#222;transform:scaleX(0.9903);transform-origin:0 0;">Requirement: System outputs</div>
<div class="a" style="left:421px;top:182px;width:636px;height:20px;background:#d9d9d9;"></div>
<div class="a" style="left:421px;top:182px;width:55px;height:20px;background:#f9f9f9;"></div>
<div class="t" style="left:432.20px;top:186.80px;font:normal 11px 'Liberation Sans',sans-serif;color:#222;transform:scaleX(0.9576);transform-origin:0 0;">Details</div>
<div class="a" style="left:421px;top:202px;width:615px;height:563px;background:#fafafa;"></div>
<div class="a" style="left:426px;top:207px;width:606px;height:24px;background:#ffffff;"></div>
<div class="a" style="left:426px;top:207px;width:606px;height:1px;background:#dcdcdc;"></div>
<div class="a" style="left:426px;top:230px;width:606px;height:1px;background:#dcdcdc;"></div>
<svg style="left:429px;top:216px" width="9" height="5" viewBox="0 0 9 5"><path d="M0 0h9l-4.5 5z" fill="#000"/></svg>
<div class="t" style="left:442.00px;top:211.70px;font:bold 13px 'Liberation Sans',sans-serif;color:#000;transform:scaleX(0.9625);transform-origin:0 0;">Properties</div>
<div class="t" style="left:430.20px;top:241.40px;font:normal 11px 'Liberation Sans',sans-serif;color:#222;">Type:</div>
<div class="a" style="left:494px;top:237px;width:93px;height:20px;background:#e1e1e1;border:1px solid #adadad;"></div>
<div class="t" style="left:498.20px;top:241.90px;font:normal 11px 'Liberation Sans',sans-serif;color:#222;">Functional</div>
<svg style="left:574px;top:245px" width="7" height="4" viewBox="0 0 7 4"><path d="M0 0h7l-3.5 4z" fill="#000"/></svg>
<div class="t" style="left:430.20px;top:263.50px;font:normal 11px 'Liberation Sans',sans-serif;color:#222;">Index:</div>
<div class="t" style="left:492.00px;top:263.50px;font:normal 11px 'Liberation Sans',sans-serif;color:#222;">4.2</div>
<div class="t" style="left:430.20px;top:282.70px;font:normal 11px 'Liberation Sans',sans-serif;color:#222;transform:scaleX(0.9924);transform-origin:0 0;">Custom ID:</div>
<div class="t" style="left:492.00px;top:282.70px;font:normal 11px 'Liberation Sans',sans-serif;color:#222;transform:scaleX(0.9891);transform-origin:0 0;">System outputs</div>
<div class="t" style="left:430.20px;top:301.70px;font:normal 11px 'Liberation Sans',sans-serif;color:#222;">Summary:</div>
<div class="t" style="left:492.00px;top:301.70px;font:normal 11px 'Liberation Sans',sans-serif;color:#222;transform:scaleX(0.9891);transform-origin:0 0;">System outputs</div>
<div class="a" style="left:508px;top:324px;width:65px;height:19px;background:#f0f0f0;border:1px solid #d9d9d9;"></div>
<div class="a" style="left:428px;top:322px;width:80px;height:21px;background:#ffffff;border:1px solid #d9d9d9;border-bottom:none;"></div>
<div class="t" style="left:440.40px;top:327.80px;font:normal 11px 'Liberation Sans',sans-serif;color:#222;transform:scaleX(0.9631);transform-origin:0 0;">Description</div>
<div class="t" style="left:518.30px;top:327.80px;font:normal 11px 'Liberation Sans',sans-serif;color:#222;transform:scaleX(0.9509);transform-origin:0 0;">Rationale</div>
<div class="a" style="left:428px;top:342px;width:600px;height:201px;background:#ffffff;border:1px solid #d9d9d9;"></div>
<div class="a" style="left:429px;top:342px;width:78px;height:1px;background:#ffffff;"></div>
<div class="t" style="left:440.50px;top:354.10px;font:bold 24px 'Liberation Serif',serif;color:#000;transform:scaleX(0.9879);transform-origin:0 0;">System outputs</div>
<div class="a" style="left:0;top:0;width:1058px;height:789px;clip-path:inset(343px 51px 267px 429px)">
<div class="a" style="left:484px;top:402px;width:523px;height:31px;background:#d9d9d9;"></div>
<div class="a" style="left:483px;top:401px;width:524px;height:1px;background:#000;"></div>
<div class="a" style="left:483px;top:433px;width:524px;height:1px;background:#000;"></div>
<div class="a" style="left:483px;top:465px;width:524px;height:1px;background:#000;"></div>
<div class="a" style="left:483px;top:497px;width:524px;height:1px;background:#000;"></div>
<div class="a" style="left:483px;top:401px;width:1px;height:121px;background:#000;"></div>
<div class="a" style="left:602px;top:401px;width:1px;height:121px;background:#000;"></div>
<div class="a" style="left:741px;top:401px;width:1px;height:121px;background:#000;"></div>
<div class="a" style="left:797px;top:401px;width:1px;height:121px;background:#000;"></div>
<div class="t" style="left:492.00px;top:401.70px;font:bold 16px 'Liberation Serif',serif;color:#000;">Name</div>
<div class="t" style="left:611.00px;top:401.70px;font:bold 16px 'Liberation Serif',serif;color:#000;">Data type</div>
<div class="t" style="left:750.00px;top:401.70px;font:bold 16px 'Liberation Serif',serif;color:#000;">Units</div>
<div class="t" style="left:805.50px;top:401.70px;font:bold 16px 'Liberation Serif',serif;color:#000;">Description</div>
<div class="t" style="left:492.00px;top:433.60px;font:normal 16px 'Liberation Serif',serif;color:#000;">reqDrv</div>
<div class="t" style="left:611.00px;top:433.60px;font:normal 16px 'Liberation Serif',serif;color:#000;">Enum: reqMode</div>
<div class="t" style="left:805.50px;top:433.60px;font:normal 16px 'Liberation Serif',serif;color:#000;">Driver’s request</div>
<div class="t" style="left:492.00px;top:465.60px;font:normal 16px 'Liberation Serif',serif;color:#000;">status</div>
<div class="t" style="left:611.00px;top:465.60px;font:normal 16px 'Liberation Serif',serif;color:#000;">boolean</div>
<div class="t" style="left:805.50px;top:465.60px;font:normal 16px 'Liberation Serif',serif;color:#000;">Cruise control system status</div>
<div class="t" style="left:492.00px;top:497.60px;font:normal 16px 'Liberation Serif',serif;color:#000;">mode</div>
<div class="t" style="left:611.00px;top:497.60px;font:normal 16px 'Liberation Serif',serif;color:#000;">Enum: opMode</div>
<div class="t" style="left:805.50px;top:497.60px;font:normal 16px 'Liberation Serif',serif;color:#000;">Operation mode of the cruise control</div>
<div class="t" style="left:805.50px;top:519.00px;font:normal 16px 'Liberation Serif',serif;color:#000;">control</div>
</div>
<div class="a" style="left:1007px;top:346px;width:17px;height:192px;background:#f0f0f0;"></div>
<div class="a" style="left:429px;top:522px;width:595px;height:17px;background:#ffffff;"></div>
<div class="a" style="left:1009px;top:363px;width:13px;height:62px;background:#c2c2c2;"></div>
<svg style="left:1011px;top:352px" width="9" height="5" viewBox="0 0 9 5"><path d="M0 5L4.5 0 9 5z" fill="#a0a0a0"/></svg>
<svg style="left:1011px;top:510px" width="9" height="5" viewBox="0 0 9 5"><path d="M0 0h9L4.5 5z" fill="#606060"/></svg>
<div class="a" style="left:432px;top:522px;width:575px;height:16px;background:#f0f0f0;"></div>
<div class="a" style="left:449px;top:524px;width:488px;height:12px;background:#c2c2c2;"></div>
<svg style="left:438px;top:526px" width="5" height="8" viewBox="0 0 5 8"><path d="M5 0v8L0 4z" fill="#a0a0a0"/></svg>
<svg style="left:996px;top:526px" width="5" height="8" viewBox="0 0 5 8"><path d="M0 0v8l5-4z" fill="#505050"/></svg>
<div class="a" style="left:1007px;top:522px;width:17px;height:16px;background:#e6e6e6;"></div>
<div class="t" style="left:430.20px;top:556.60px;font:normal 11px 'Liberation Sans',sans-serif;color:#222;transform:scaleX(0.9677);transform-origin:0 0;">Keywords:</div>
<div class="a" style="left:489px;top:553px;width:538px;height:20px;background:#f0f0f0;border:1px solid #c8c8c8;"></div>
<svg style="left:432px;top:589px" width="6" height="9" viewBox="0 0 6 9"><path d="M0 0l6 4.5L0 9z" fill="#000"/></svg>
<div class="t" style="left:444.00px;top:588.00px;font:normal 11px 'Liberation Sans',sans-serif;color:#222;transform:scaleX(0.9901);transform-origin:0 0;">Revision information:</div>
<div class="a" style="left:850px;top:614px;width:96px;height:21px;background:#e1e1e1;border:1px solid #adadad;"></div>
<div class="t" style="left:852.90px;top:618.70px;font:normal 11px 'Liberation Sans',sans-serif;color:#222;transform:scaleX(0.9956);transform-origin:0 0;">Show in document</div>
<div class="a" style="left:954px;top:614px;width:73px;height:21px;background:#e1e1e1;border:1px solid #adadad;"></div>
<div class="t" style="left:973.69px;top:618.70px;font:normal 11px 'Liberation Sans',sans-serif;color:#222;">Unlock</div>
<div class="a" style="left:426px;top:646px;width:606px;height:24px;background:#ffffff;"></div>
<div class="a" style="left:426px;top:646px;width:606px;height:1px;background:#dcdcdc;"></div>
<div class="a" style="left:426px;top:669px;width:606px;height:1px;background:#dcdcdc;"></div>
<svg style="left:429px;top:655px" width="9" height="5" viewBox="0 0 9 5"><path d="M0 0h9l-4.5 5z" fill="#000"/></svg>
<div class="t" style="left:442.30px;top:650.60px;font:bold 13px 'Liberation Sans',sans-serif;color:#000;transform:scaleX(0.9244);transform-origin:0 0;">Links</div>
<div class="a" style="left:428px;top:674px;width:602px;height:89px;background:#ffffff;"></div>
<svg style="left:440px;top:686px" width="9" height="9" viewBox="0 0 9 9"><rect x="0.5" y="0.5" width="8" height="8" fill="#fff" stroke="#888"/><path d="M2 4.5h5" stroke="#222"/></svg>
<svg style="left:457px;top:688px" width="12" height="11" viewBox="0 0 12 11"><path d="M0.8 5.5L5.5 1v3h6v3h-6v3z" fill="#cfcfcf" stroke="#111" stroke-width="1.3" stroke-linejoin="round"/></svg>
<div class="t" style="left:475.50px;top:685.80px;font:bold 13px 'Liberation Sans',sans-serif;color:#383838;transform:scaleX(1.0019);transform-origin:0 0;">Related to:</div>
<svg style="left:458px;top:707px" width="16" height="16" viewBox="0 0 16 16"><path d="M8 1L15.2 15H0.8z" fill="#ffc107" stroke="#ffc107" stroke-width="1.6" stroke-linejoin="round"/><rect x="7" y="5" width="2" height="6" fill="#fff"/><rect x="7" y="12" width="2" height="2" fill="#fff"/></svg>
<div class="t" style="left:481.00px;top:710.60px;font:normal 13.3px 'Liberation Sans',sans-serif;color:#0000ee;text-decoration:underline;">crs_plant:263</div>
<svg style="left:458px;top:726px" width="16" height="16" viewBox="0 0 16 16"><path d="M8 1L15.2 15H0.8z" fill="#ffc107" stroke="#ffc107" stroke-width="1.6" stroke-linejoin="round"/><rect x="7" y="5" width="2" height="6" fill="#fff"/><rect x="7" y="12" width="2" height="2" fill="#fff"/></svg>
<div class="t" style="left:481.00px;top:729.60px;font:normal 13.3px 'Liberation Sans',sans-serif;color:#0000ee;text-decoration:underline;">crs_plant:75</div>
<div class="a" style="left:1037px;top:203px;width:15px;height:560px;background:#f0f0f0;"></div>
<div class="a" style="left:1037px;top:220px;width:15px;height:466px;background:#cdcdcd;"></div>
<svg style="left:1041px;top:209px" width="8" height="7" viewBox="0 0 8 7"><path d="M0.8 5.6L4 1.6 7.2 5.6" fill="none" stroke="#505050" stroke-width="2"/></svg>
<svg style="left:1041px;top:752px" width="8" height="7" viewBox="0 0 8 7"><path d="M0.8 1.4L4 5.4 7.2 1.4" fill="none" stroke="#505050" stroke-width="2"/></svg>
<div class="a" style="left:420px;top:765px;width:635px;height:1px;background:#d4d4d4;"></div>
<div class="a" style="left:1052px;top:778px;width:2px;height:2px;background:#a8a8a8;"></div>
<div class="a" style="left:1049px;top:781px;width:2px;height:2px;background:#a8a8a8;"></div>
<div class="a" style="left:1052px;top:781px;width:2px;height:2px;background:#a8a8a8;"></div>
<div class="a" style="left:1046px;top:784px;width:2px;height:2px;background:#a8a8a8;"></div>
<div class="a" style="left:1049px;top:784px;width:2px;height:2px;background:#a8a8a8;"></div>
<div class="a" style="left:1052px;top:784px;width:2px;height:2px;background:#a8a8a8;"></div>
</body></html>
